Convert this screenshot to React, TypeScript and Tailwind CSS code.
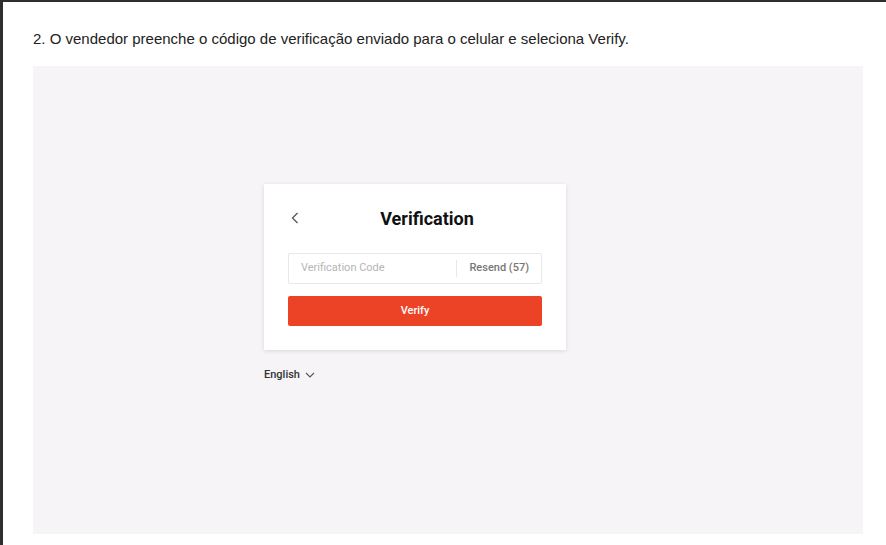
import React from "react";

export default function App() {
  return (
    <div className="w-[886px] h-[545px] bg-[#2e2e2e] pl-[3px] pt-[2px] overflow-hidden">
      <div className="w-full h-full bg-white flex flex-col pl-[30px] pr-[20px]" style={{ fontFamily: '"Liberation Sans", Arial, sans-serif' }}>
        <div className="h-[64px] flex items-center text-[15px] text-[#222] pt-[10px]">
          2. O vendedor preenche o código de verificação enviado para o celular e seleciona Verify.
        </div>
        <div className="w-[830px] h-[468px] bg-[#f6f4f7] flex flex-col items-start pl-[231px] pt-[118px]" style={{ fontFamily: 'Roboto, "Liberation Sans", sans-serif' }}>
          <div className="w-[302px] flex flex-col">
            <div className="w-[302px] h-[166px] bg-white shadow-[0_1px_4px_rgba(0,0,0,0.12)] flex flex-col px-[24px] pt-[22px]">
              <div className="relative h-[24px] flex items-center justify-center">
                <svg className="absolute left-[3px] top-[6px]" width="8" height="12" viewBox="0 0 8 12" fill="none">
                  <path d="M6.5 1 L1.5 6 L6.5 11" stroke="#555" strokeWidth="1.3" />
                </svg>
                <span className="text-[18px] font-bold text-[#111] ml-[24px]">Verification</span>
              </div>
              <div className="mt-[23px] h-[31px] border border-[#e8e8e8] rounded-[2px] flex items-center">
                <span className="flex-1 pl-[12px] text-[11px] text-[#b5b5b5]">Verification Code</span>
                <span className="h-[17px] border-l border-[#e8e8e8]" />
                <span className="px-[12px] text-[11px] text-[#777] font-medium">Resend (57)</span>
              </div>
              <div className="mt-[12px] h-[30px] bg-[#ec4326] rounded-[2px] flex items-center justify-center text-white text-[11px] font-medium">
                Verify
              </div>
            </div>
            <div className="mt-[17px] flex items-center gap-[5px] text-[11px] text-[#333] font-medium">
              English
              <svg width="10" height="6" viewBox="0 0 10 6" fill="none">
                <path d="M1 1 L5 5 L9 1" stroke="#555" strokeWidth="1.1" />
              </svg>
            </div>
          </div>
        </div>
      </div>
    </div>
  );
}
